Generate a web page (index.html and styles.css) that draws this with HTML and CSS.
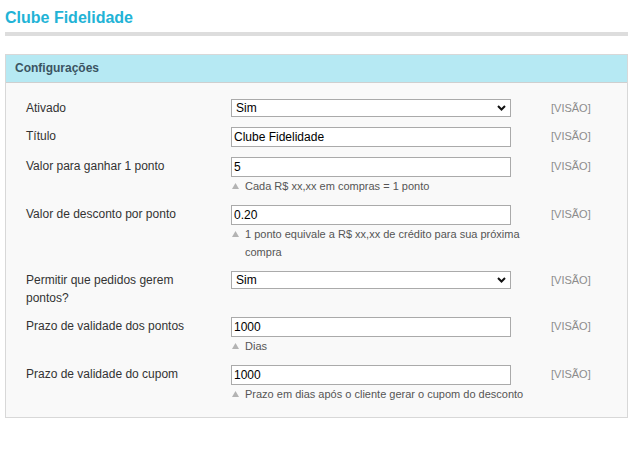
FILE: index.html
```html
<!DOCTYPE html>
<html lang="pt-BR">
<head>
<meta charset="utf-8">
<title>Clube Fidelidade</title>
<link rel="stylesheet" href="styles.css">
</head>
<body>
<div class="page">
  <h1 class="page-title">Clube Fidelidade</h1>
  <div class="panel">
    <div class="panel-header">Configurações</div>
    <div class="panel-body">
      <div class="form-grid">
        <div class="label">Ativado</div>
        <div class="field">
          <div class="select-wrap">
            <select class="control select"><option>Sim</option><option>Não</option></select>
            <svg class="chevron" width="9" height="6" viewBox="0 0 9 6"><path d="M1 1 L4.5 4.5 L8 1" fill="none" stroke="#111" stroke-width="2"/></svg>
          </div>
        </div>
        <div class="scope">[VISÃO]</div>

        <div class="label">Título</div>
        <div class="field"><input class="control input" type="text" value="Clube Fidelidade"></div>
        <div class="scope">[VISÃO]</div>

        <div class="label">Valor para ganhar 1 ponto</div>
        <div class="field">
          <input class="control input" type="text" value="5">
          <div class="hint"><svg class="tri" width="7" height="6" viewBox="0 0 7 6"><polygon points="3.5,0 7,6 0,6" fill="#b3b3b3"/></svg><span>Cada R$ xx,xx em compras = 1 ponto</span></div>
        </div>
        <div class="scope">[VISÃO]</div>

        <div class="label">Valor de desconto por ponto</div>
        <div class="field">
          <input class="control input" type="text" value="0.20">
          <div class="hint"><svg class="tri" width="7" height="6" viewBox="0 0 7 6"><polygon points="3.5,0 7,6 0,6" fill="#b3b3b3"/></svg><span>1 ponto equivale a R$ xx,xx de crédito para sua próxima compra</span></div>
        </div>
        <div class="scope">[VISÃO]</div>

        <div class="label">Permitir que pedidos gerem pontos?</div>
        <div class="field">
          <div class="select-wrap">
            <select class="control select"><option>Sim</option><option>Não</option></select>
            <svg class="chevron" width="9" height="6" viewBox="0 0 9 6"><path d="M1 1 L4.5 4.5 L8 1" fill="none" stroke="#111" stroke-width="2"/></svg>
          </div>
        </div>
        <div class="scope">[VISÃO]</div>

        <div class="label">Prazo de validade dos pontos</div>
        <div class="field">
          <input class="control input" type="text" value="1000">
          <div class="hint"><svg class="tri" width="7" height="6" viewBox="0 0 7 6"><polygon points="3.5,0 7,6 0,6" fill="#b3b3b3"/></svg><span>Dias</span></div>
        </div>
        <div class="scope">[VISÃO]</div>

        <div class="label">Prazo de validade do cupom</div>
        <div class="field">
          <input class="control input" type="text" value="1000">
          <div class="hint"><svg class="tri" width="7" height="6" viewBox="0 0 7 6"><polygon points="3.5,0 7,6 0,6" fill="#b3b3b3"/></svg><span>Prazo em dias após o cliente gerar o cupom do desconto</span></div>
        </div>
        <div class="scope">[VISÃO]</div>
      </div>
    </div>
  </div>
</div>
</body>
</html>
```
FILE: styles.css
```css
html, body {
  margin: 0;
  padding: 0;
  background: #fff;
  overflow: hidden;
}
body {
  font-family: "Liberation Sans", Arial, sans-serif;
  font-size: 12px;
  color: #333;
}
.page {
  padding: 8px 0 0 5px;
}
.page-title {
  margin: 0;
  font-size: 16px;
  line-height: 20px;
  font-weight: bold;
  color: #22b3d6;
  padding-bottom: 4px;
  border-bottom: 4px solid #dddddd;
}
.panel {
  margin-top: 18px;
  border: 1px solid #d8d8d8;
  background: #f9f9f9;
}
.panel-header {
  background: #b6e9f3;
  height: 27px;
  line-height: 26px;
  padding-left: 9px;
  font-weight: bold;
  font-size: 12px;
  color: #3b5462;
  border-bottom: 1px solid #cfcfcf;
}
.panel-body {
  padding: 16px 0 14px 20px;
}
.form-grid {
  display: grid;
  grid-template-columns: 205px 280px auto;
  row-gap: 10px;
  column-gap: 0;
}
.label {
  line-height: 18px;
  padding-right: 25px;
  color: #333;
}
.field {
  width: 280px;
}
.scope {
  padding-left: 40px;
  line-height: 18px;
  font-size: 11px;
  color: #8c8c8c;
}
.control {
  display: block;
  box-sizing: border-box;
  width: 280px;
  margin: 0;
  font-family: "Liberation Sans", Arial, sans-serif;
  font-size: 12px;
  color: #000;
  background: #fff;
  border: 1px solid #aaaaaa;
  border-radius: 0;
  outline: none;
}
.input {
  height: 20px;
  padding: 0 2px;
}
.select-wrap {
  position: relative;
  width: 280px;
}
.select {
  height: 18px;
  padding: 0 4px;
  -webkit-appearance: none;
  appearance: none;
  line-height: 16px;
}
.chevron {
  position: absolute;
  right: 5px;
  top: 6px;
  pointer-events: none;
}
.hint {
  display: flex;
  align-items: flex-start;
  width: 300px;
  font-size: 11px;
  line-height: 18px;
  color: #555;
}
.tri {
  flex: none;
  margin: 6px 6px 0 1px;
}
```
